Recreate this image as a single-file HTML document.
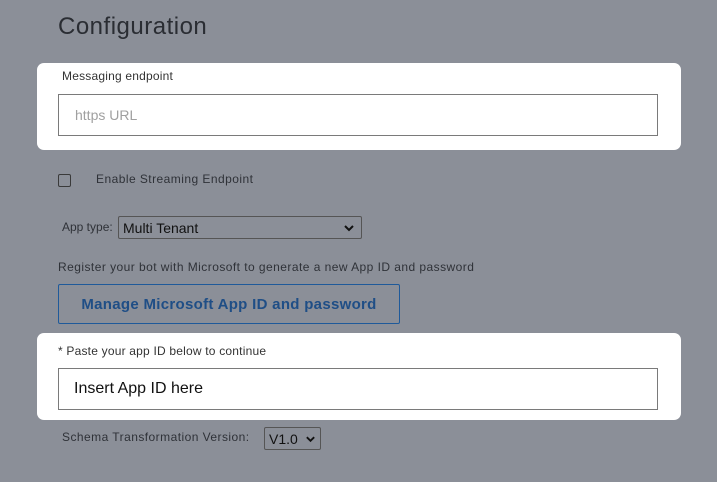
<!DOCTYPE html>
<html><head><style>
body{margin:0;width:717px;height:482px;background:#8b8f98;font-family:"Liberation Sans",sans-serif;position:relative;overflow:hidden;color:#2b2e34}
.a{position:absolute}
.s{letter-spacing:0.45px}
.panel{position:absolute;left:37px;width:644px;background:#fff;border-radius:7px}
.inp{position:absolute;left:58px;width:598px;height:40px;border:1px solid #7a7a7a;background:#fff}
</style></head><body>
<div class="a" style="left:58px;top:13px;font-size:24px;color:#2a2d33;letter-spacing:0.5px">Configuration</div>
<div class="panel" style="top:63px;height:87px"></div>
<div class="a s" style="left:62px;top:69px;font-size:12px;color:#333;letter-spacing:0.2px">Messaging endpoint</div>
<div class="inp" style="top:94px"><span class="a" style="left:16px;top:12px;font-size:14px;color:#a0a0a0">https URL</span></div>
<div class="a" style="left:58px;top:174px;width:11px;height:11px;border:1px solid #3a3a3a;border-radius:2px"></div>
<div class="a s" style="left:96px;top:172px;font-size:12px;color:#2f3238">Enable Streaming Endpoint</div>
<div class="a" style="left:62px;top:220px;font-size:12px;color:#2f3238">App type:</div>
<div class="a" style="left:118px;top:216px;width:244px;height:23px;border:1px solid #555;border-radius:2px;box-sizing:border-box">
<span class="a" style="left:4px;top:3px;font-size:14px;color:#111">Multi Tenant</span>
<svg class="a" style="left:224px;top:7px" width="12" height="8" viewBox="0 0 12 8"><path d="M2 2l4 4 4-4" stroke="#111" stroke-width="2" fill="none"/></svg></div>
<div class="a s" style="left:58px;top:260px;font-size:12px;color:#2f3238">Register your bot with Microsoft to generate a new App ID and password</div>
<div class="a" style="left:58px;top:284px;width:342px;height:40px;border:1px solid #1f5a9a;border-radius:2px;box-sizing:border-box;text-align:center;line-height:40px;font-size:15px;font-weight:bold;color:#1f4e86;letter-spacing:0.3px">Manage Microsoft App ID and password</div>
<div class="panel" style="top:333px;height:87px"></div>
<div class="a s" style="left:58px;top:344px;font-size:12px;color:#333;letter-spacing:0.2px">* Paste your app ID below to continue</div>
<div class="inp" style="top:368px"><span class="a" style="left:15px;top:11px;font-size:16px;color:#111">Insert App ID here</span></div>
<div class="a s" style="left:62px;top:430px;font-size:12px;color:#2f3238">Schema Transformation Version:</div>
<div class="a" style="left:264px;top:427px;width:57px;height:23px;border:1px solid #555;border-radius:2px;box-sizing:border-box">
<span class="a" style="left:4px;top:3px;font-size:14px;color:#111">V1.0</span>
<svg class="a" style="left:40px;top:7px" width="11" height="8" viewBox="0 0 12 8"><path d="M2 2l4 4 4-4" stroke="#111" stroke-width="2" fill="none"/></svg></div>
</body></html>
